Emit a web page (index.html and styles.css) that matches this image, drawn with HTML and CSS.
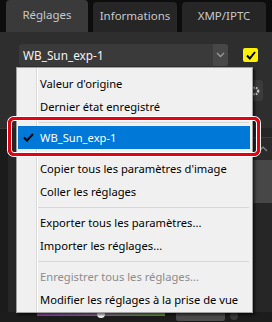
FILE: index.html
```html
<!DOCTYPE html>
<html lang="fr">

<head>
    <meta charset="UTF-8">
    <meta name="viewport" content="width=device-width, initial-scale=1.0">
    <title>Réglages</title>
    <link rel="stylesheet" href="styles.css">
</head>

<body>
    <div id="app">
        <div class="tabs">
            <div class="tab active">Réglages</div>
            <div class="tab">Informations</div>
            <div class="tab">XMP/IPTC</div>
        </div>

        <div class="panel-top">
            <div class="preset-row">
                <div class="preset-select">
                    <span class="preset-name">WB_Sun_exp-1</span>
                    <span class="preset-arrow">
                        <svg width="9" height="6" viewBox="0 0 9 6"><path d="M1 1 L4.5 4.5 L8 1" fill="none" stroke="#9a9a9a" stroke-width="1.3"/></svg>
                    </span>
                </div>
                <div class="yellow-check">
                    <svg width="10" height="9" viewBox="0 0 10 9"><path d="M1 4.5 L3.8 7.5 L9 1" fill="none" stroke="#000" stroke-width="2"/></svg>
                </div>
            </div>
            <div class="tool-row">
                <div class="gear-box">
                    <svg width="12" height="12" viewBox="0 0 12 12"><circle cx="6" cy="6" r="3.2" fill="none" stroke="#bdbdbd" stroke-width="2.4" stroke-dasharray="1.6 1"/><circle cx="6" cy="6" r="1.2" fill="#3b3b3b"/></svg>
                </div>
            </div>
        </div>

        <div class="section">
            <div class="section-left"></div>
            <div class="section-mid"></div>
            <div class="section-right">
                <div class="section-head">
                    <svg width="10" height="6" viewBox="0 0 10 6"><path d="M1 5 L5 1 L9 5" fill="none" stroke="#8a8a8a" stroke-width="1.2"/></svg>
                </div>
                <div class="scroll-thumb"></div>
            </div>
        </div>

        <div class="bottom-strip">
            <div class="tint-bar"><span class="tint-knob"></span></div>
            <div class="value-box"></div>
            <div class="value-dot"></div>
        </div>

        <!-- context menu of the preset list -->
        <div class="menu">
            <div class="menu-item">Valeur d'origine</div>
            <div class="menu-item">Dernier état enregistré</div>
            <div class="menu-sep"></div>
            <div class="menu-item selected">
                <svg class="check" width="11" height="9" viewBox="0 0 11 9"><path d="M1 4.5 L4 7.5 L10 1" fill="none" stroke="#000" stroke-width="2"/></svg>
                WB_Sun_exp-1
            </div>
            <div class="menu-sep"></div>
            <div class="menu-item">Copier tous les paramètres d'image</div>
            <div class="menu-item">Coller les réglages</div>
            <div class="menu-sep"></div>
            <div class="menu-item">Exporter tous les paramètres...</div>
            <div class="menu-item">Importer les réglages...</div>
            <div class="menu-sep"></div>
            <div class="menu-item disabled">Enregistrer tous les réglages...</div>
            <div class="menu-item">Modifier les réglages à la prise de vue</div>
        </div>

        <div class="callout"></div>
    </div>
</body>

</html>
```

FILE: styles.css
```css
body {
    margin: 0;
    background-color: #0d0d0d;
    font-family: "Noto Sans", sans-serif;
}

#app {
    position: relative;
    width: 272px;
    height: 322px;
    overflow: hidden;
}

.tabs {
    display: flex;
    gap: 5px;
    height: 32px;
    padding-left: 6px;
}

.tab {
    width: 84px;
    margin-top: 2px;
    background-color: #262626;
    border-radius: 4px 4px 0 0;
    color: #c8c8c8;
    font-size: 11.5px;
    line-height: 28px;
    text-align: center;
}

.tab.active {
    width: 82px;
    margin-top: 0;
    background-color: #3a3a3a;
    line-height: 30px;
}

.panel-top {
    height: 96px;
    background-color: #2e2e2e;
}

.preset-row {
    display: flex;
    align-items: center;
    padding: 12px 0 0 19px;
}

.preset-select {
    display: flex;
    width: 209px;
    height: 22px;
    background-color: #3a3a3a;
    border-radius: 3px;
    overflow: hidden;
}

.preset-name {
    flex: 1;
    padding-left: 4px;
    color: #f2f2f2;
    font-size: 11.8px;
    line-height: 22px;
}

.preset-arrow {
    display: flex;
    align-items: center;
    justify-content: center;
    width: 15px;
    background-color: #474747;
}

.yellow-check {
    display: flex;
    align-items: center;
    justify-content: center;
    width: 15px;
    height: 14px;
    margin-left: 15px;
    background-color: #fff200;
    border-radius: 2px;
}

.tool-row {
    display: flex;
    justify-content: flex-end;
    padding: 14px 9px 0 0;
}

.gear-box {
    display: flex;
    align-items: center;
    justify-content: flex-end;
    width: 14px;
    height: 21px;
    padding-right: 2px;
    background-color: #3b3b3b;
    border-radius: 3px;
}

.section {
    display: flex;
    height: 184px;
    background-color: #262626;
}

.section-left {
    width: 8px;
    background-color: #1b1b1b;
    border-top: 1px solid #3a3a3a;
}

.section-mid {
    flex: 1;
}

.section-right {
    width: 19px;
}

.section-head {
    display: flex;
    justify-content: center;
    align-items: center;
    height: 22px;
    margin-top: 9px;
    border-top: 1px solid #3c3c3c;
    background-color: #2b2b2b;
}

.scroll-thumb {
    height: 43px;
    background-color: #474747;
}

.bottom-strip {
    display: flex;
    align-items: flex-start;
    height: 10px;
    background-color: #1c1c1c;
}

.tint-bar {
    position: relative;
    width: 128px;
    height: 4px;
    margin-left: 37px;
    background: linear-gradient(to right, #a03cb4, #8a6a9a, #58a028);
}

.tint-knob {
    position: absolute;
    left: 60px;
    top: 0;
    width: 8px;
    height: 6px;
    background-color: #f0f0f0;
    border-radius: 0 0 4px 4px;
}

.value-box {
    width: 49px;
    height: 9px;
    margin-left: 11px;
    background-color: #4a4a4a;
    border-radius: 0 0 2px 2px;
}

.value-dot {
    width: 8px;
    height: 8px;
    margin-left: 5px;
    background-color: #3a3a3a;
    border-radius: 50%;
}

/* dropdown menu */
.menu {
    position: absolute;
    left: 16px;
    top: 67px;
    width: 235px;
    padding: 4px 0 1px 0;
    border: 1px solid #a0a0a0;
    background: linear-gradient(to right, #f0f0f0 19px, #d9d9d9 19px, #d9d9d9 20px, #ffffff 20px, #ffffff 21px, #f0f0f0 21px);
    box-shadow: 2px 2px 2px rgba(0, 0, 0, 0.55);
}

.menu-item {
    position: relative;
    height: 23px;
    padding-left: 23px;
    color: #000;
    font-size: 11.2px;
    line-height: 23px;
    white-space: nowrap;
}

.menu-item.selected {
    margin: 0 2px 0 1px;
    padding-left: 22px;
    background-color: #0078d7;
    color: #fff;
}

.menu-item.selected .check {
    position: absolute;
    left: 5px;
    top: 7px;
}

.menu-item.disabled {
    color: #8c8c8c;
}

.menu-sep {
    height: 4px;
    margin: 0 3px 3px 21px;
    border-bottom: 1px solid #d7d7d7;
}

.callout {
    position: absolute;
    left: 8px;
    top: 117px;
    width: 252px;
    height: 39px;
    box-sizing: border-box;
    border: 3px solid #e50012;
    border-radius: 6px;
    box-shadow: 0 0 0 1px #fff, inset 0 0 0 1px #fff;
}
```
